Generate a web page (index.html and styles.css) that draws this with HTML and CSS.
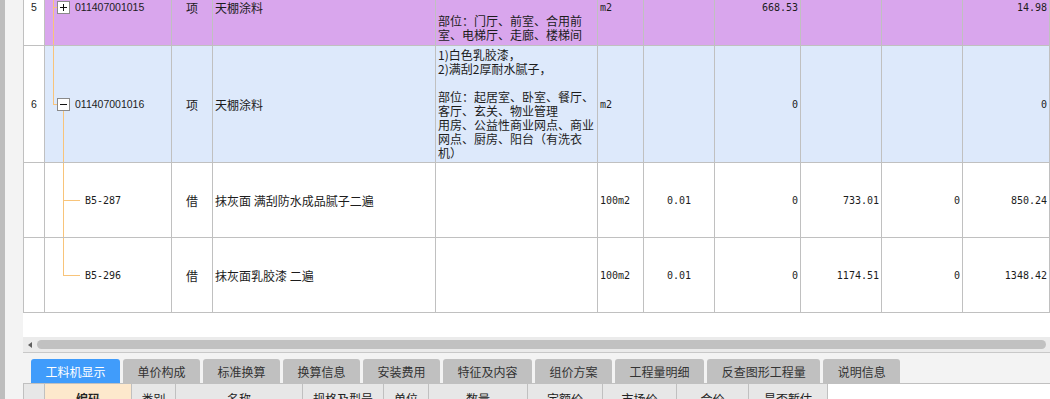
FILE: index.html
```html
<!DOCTYPE html>
<html lang="zh">
<head>
<meta charset="utf-8">
<title>清单</title>
<link rel="stylesheet" href="styles.css">
</head>
<body>
<div class="app">
  <div class="rail"></div>
  <div class="gutter"></div>
  <div class="main">
    <div class="grid-view">
      <div class="grid">
        <div class="row h77 purple">
          <div class="c-no">5</div>
          <div class="c-code pl8">
            <span class="elbow cont"></span>
            <span class="node"><svg class="box" width="13" height="13" viewBox="0 0 13 13"><rect x="0.5" y="0.5" width="12" height="12" fill="#fff" stroke="#8a8a8a"/><path d="M3 6.5H10M6.5 3V10" stroke="#111" stroke-width="1"/></svg></span>
            <span class="code-txt">011407001015</span>
          </div>
          <div class="c-type">项</div>
          <div class="c-name">天棚涂料</div>
          <div class="c-desc"><div class="lines"><br><br><br>部位：门厅、前室、合用前<br>室、电梯厅、走廊、楼梯间</div></div>
          <div class="c-unit">m2</div>
          <div class="c-qty"></div>
          <div class="c-num">668.53</div>
          <div class="c-num"></div>
          <div class="c-num"></div>
          <div class="c-num">14.98</div>
        </div>
        <div class="row h117 blue">
          <div class="c-no">6</div>
          <div class="c-code pl8">
            <span class="elbow"></span>
            <span class="node open"><svg class="box" width="13" height="13" viewBox="0 0 13 13"><rect x="0.5" y="0.5" width="12" height="12" fill="#fff" stroke="#8a8a8a"/><path d="M3 6.5H10" stroke="#111" stroke-width="1"/></svg></span>
            <span class="code-txt">011407001016</span>
          </div>
          <div class="c-type">项</div>
          <div class="c-name">天棚涂料</div>
          <div class="c-desc"><div class="lines">1)白色乳胶漆，<br>2)满刮2厚耐水腻子，<br><br>部位：起居室、卧室、餐厅、<br>客厅、玄关、物业管理<br>用房、公益性商业网点、商业<br>网点、厨房、阳台（有洗衣<br>机）</div></div>
          <div class="c-unit">m2</div>
          <div class="c-qty"></div>
          <div class="c-num">0</div>
          <div class="c-num"></div>
          <div class="c-num"></div>
          <div class="c-num">0</div>
        </div>
        <div class="row h75">
          <div class="c-no"></div>
          <div class="c-code pl18">
            <span class="elbow wide cont"></span>
            <span class="sub-txt">B5-287</span>
          </div>
          <div class="c-type">借</div>
          <div class="c-name">抹灰面 满刮防水成品腻子二遍</div>
          <div class="c-desc"></div>
          <div class="c-unit">100m2</div>
          <div class="c-qty">0.01</div>
          <div class="c-num">0</div>
          <div class="c-num">733.01</div>
          <div class="c-num">0</div>
          <div class="c-num">850.24</div>
        </div>
        <div class="row h75">
          <div class="c-no"></div>
          <div class="c-code pl18">
            <span class="elbow wide"></span>
            <span class="sub-txt">B5-296</span>
          </div>
          <div class="c-type">借</div>
          <div class="c-name">抹灰面乳胶漆 二遍</div>
          <div class="c-desc"></div>
          <div class="c-unit">100m2</div>
          <div class="c-qty">0.01</div>
          <div class="c-num">0</div>
          <div class="c-num">1174.51</div>
          <div class="c-num">0</div>
          <div class="c-num">1348.42</div>
        </div>
      </div>
    </div>
    <div class="hscroll"><span class="arrow"></span><span class="thumb"></span></div>
    <div class="tabs">
      <div class="tab active">工料机显示</div>
      <div class="tab">单价构成</div>
      <div class="tab">标准换算</div>
      <div class="tab">换算信息</div>
      <div class="tab">安装费用</div>
      <div class="tab">特征及内容</div>
      <div class="tab">组价方案</div>
      <div class="tab">工程量明细</div>
      <div class="tab">反查图形工程量</div>
      <div class="tab">说明信息</div>
    </div>
    <div class="dhead">
      <div class="dh w22 first"></div>
      <div class="dh w87 key">编码</div>
      <div class="dh w44">类别</div>
      <div class="dh w127">名称</div>
      <div class="dh w81">规格及型号</div>
      <div class="dh w45">单位</div>
      <div class="dh w99">数量</div>
      <div class="dh w75">定额价</div>
      <div class="dh w74">市场价</div>
      <div class="dh w72">合价</div>
      <div class="dh w79">是否暂估</div>
    </div>
  </div>
</div>
</body>
</html>
```

FILE: styles.css
```css
* { box-sizing: border-box; }
html, body { margin: 0; padding: 0; }
body {
  width: 1050px;
  height: 399px;
  overflow: hidden;
  font-family: "Noto Sans CJK SC", "Liberation Sans", sans-serif;
  font-size: 12px;
  color: #1c1c1c;
}
.app { display: flex; height: 399px; }
.rail { width: 5px; flex: none; background: #bdbdbd; }
.gutter { width: 18px; flex: none; background: #f3f3f3; }
.main {
  flex: 1;
  min-width: 0;
  display: flex;
  flex-direction: column;
  overflow: hidden;
  background: #f3f3f3;
}

/* main grid */
.grid-view { height: 337px; flex: none; overflow: hidden; background: #fff; }
.grid { margin-top: -31px; border-left: 1px solid #c0c0c0; width: max-content; }
.row {
  display: grid;
  grid-template-columns: 21px 127px 41px 223px 162px 46px 71px 86px 81px 81px 87px;
}
.h77 { height: 77px; }
.h117 { height: 117px; }
.h75 { height: 75px; }
.row > div {
  border-right: 1px solid #c0c0c0;
  border-bottom: 1px solid #c0c0c0;
  display: flex;
  align-items: center;
  overflow: hidden;
  white-space: nowrap;
}
.purple > div { background: #d9a6ed; }
.blue > div { background: #dde9fb; }
.row > .c-no {
  background: #fff;
  justify-content: center;
  font-family: "Liberation Sans", sans-serif;
  font-size: 10.5px;
}
.row > .c-code { align-items: stretch; }
.pl8 { padding-left: 8px; }
.pl18 { padding-left: 18px; }
.elbow { width: 4px; flex: none; display: flex; flex-direction: column; }
.elbow.wide { width: 17px; }
.elbow::before {
  content: "";
  flex: 1;
  border-left: 1px solid #f8c47a;
  border-bottom: 1px solid #f8c47a;
}
.elbow::after { content: ""; flex: 1; }
.elbow.cont::after { border-left: 1px solid #f8c47a; }
.node { width: 13px; flex: none; display: flex; flex-direction: column; }
.node::before, .node::after { content: ""; flex: 1; }
.node.open::after { margin-left: 6px; border-left: 1px solid #f8c47a; }
.box { display: block; flex: none; }
.code-txt {
  align-self: center;
  margin-left: 5px;
  font-family: "Liberation Sans", sans-serif;
  font-size: 10.5px;
}
.sub-txt {
  align-self: center;
  margin-left: 5px;
  font-family: "DejaVu Sans Mono", monospace;
  font-size: 10px;
}
.row > .c-type { justify-content: center; }
.row > .c-name { padding-left: 2px; }
.row > .c-desc { padding-left: 2px; }
.lines { line-height: 14px; }
.row > .c-unit {
  padding-left: 2px;
  font-family: "DejaVu Sans Mono", monospace;
  font-size: 10px;
}
.row > .c-qty {
  justify-content: center;
  font-family: "DejaVu Sans Mono", monospace;
  font-size: 10px;
}
.row > .c-num {
  justify-content: flex-end;
  padding-right: 2px;
  font-family: "DejaVu Sans Mono", monospace;
  font-size: 10px;
}

/* horizontal scrollbar */
.hscroll {
  height: 16px;
  flex: none;
  display: flex;
  align-items: center;
  padding: 0 4px 0 5px;
  background: #ebebeb;
  border-bottom: 1px solid #c8c8c8;
}
.arrow {
  width: 0;
  height: 0;
  border-top: 3.5px solid transparent;
  border-bottom: 3.5px solid transparent;
  border-right: 4px solid #5f5f5f;
}
.thumb {
  flex: 1;
  height: 9px;
  margin-left: 5px;
  border-radius: 5px;
  background: #c1c1c1;
}

/* tabs */
.tabs {
  height: 30px;
  flex: none;
  display: flex;
  gap: 3px;
  padding: 6px 0 0 8px;
}
.tab {
  height: 24px;
  padding: 0 14.5px;
  display: flex;
  align-items: center;
  background: #c0c0c0;
  border-radius: 3px 3px 0 0;
  color: #333;
  white-space: nowrap;
}
.tab.active { background: #409cfb; color: #fff; }

/* detail header */
.dhead {
  flex: none;
  height: 30px;
  display: flex;
  border-top: 1px solid #c0c0c0;
  background: #fff;
}
.dh {
  flex: none;
  height: 100%;
  display: flex;
  align-items: center;
  justify-content: center;
  background: #e7e7e7;
  border-right: 1px solid #c0c0c0;
  color: #222;
  white-space: nowrap;
}
.dh.first { border-left: 1px solid #c0c0c0; }
.dh.key { background: #fde8cc; font-weight: bold; }
.w22 { width: 22px; }
.w87 { width: 87px; }
.w44 { width: 44px; }
.w127 { width: 127px; }
.w81 { width: 81px; }
.w45 { width: 45px; }
.w99 { width: 99px; }
.w75 { width: 75px; }
.w74 { width: 74px; }
.w72 { width: 72px; }
.w79 { width: 79px; }
```
